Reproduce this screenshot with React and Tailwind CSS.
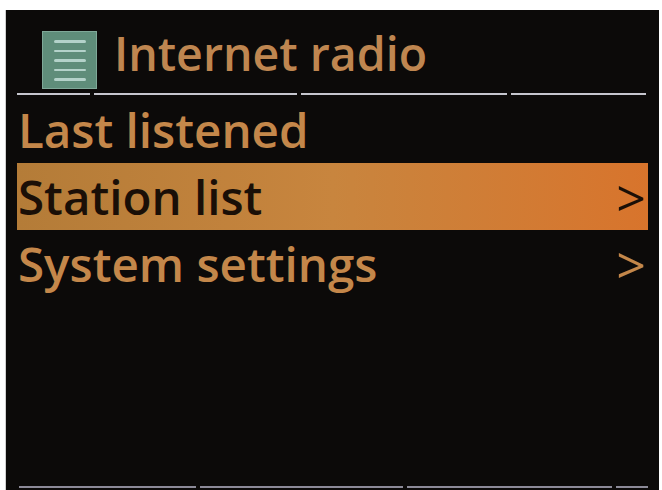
import React from 'react';

const menu = [
  { label: 'Last listened', arrow: false },
  { label: 'Station list', arrow: true, active: true },
  { label: 'System settings', arrow: true },
];

function ListIcon() {
  return (
    <div className="flex h-[58px] w-[55px] flex-col items-center justify-start gap-[7px] border border-[#7fa898] bg-[#5f8d7a] pt-[8px]">
      {[0, 1, 2, 3, 4].map((i) => (
        <div key={i} className="h-[2.5px] w-[32px] rounded-full bg-[#b4d2ca]" />
      ))}
    </div>
  );
}

function Divider({ segments, color }) {
  return (
    <div className="flex gap-[4px]">
      {segments.map((w, i) => (
        <div key={i} className={`h-[2px] ${color}`} style={{ width: w }} />
      ))}
    </div>
  );
}

function MenuRow({ label, arrow, active }) {
  return (
    <div
      className={`flex h-[67px] items-center justify-between pl-[1px] pr-[2px] text-[47.5px] font-semibold leading-[67px] ${
        active
          ? 'bg-gradient-to-r from-[#b47c38] via-[#c8853e] to-[#d8742c] text-[#1a0f07]'
          : 'text-[#c4874a]'
      }`}
    >
      <span>{label}</span>
      {arrow && <span className="text-[52px] font-medium">&gt;</span>}
    </div>
  );
}

export default function App() {
  return (
    <div
      className="h-[490px] w-[662px] overflow-hidden bg-white pl-[5px] pr-[3px] pt-[10px]"
      style={{ fontFamily: '"Open Sans", "Noto Sans", sans-serif' }}
    >
      <div className="flex h-[480px] flex-col border-l border-[#d0d0d0] bg-[#0c0a09] pl-[11px] pr-[11px]">
        <div className="flex h-[83px] items-start gap-[17px] pl-[25px] pt-[21px]">
          <ListIcon />
          <span className="mt-[-1px] text-[46.5px] font-semibold leading-[47px] text-[#bf8650]">Internet radio</span>
        </div>
        <Divider segments={[73, 203, 206, 135]} color="bg-[#c6c6ce]" />
        <div className="mt-[1px] flex flex-col">
          {menu.map((m) => (
            <MenuRow key={m.label} {...m} />
          ))}
        </div>
        <div className="flex-1" />
        <div className="pl-[2px]">
          <Divider segments={[177, 203, 205, 32]} color="bg-[#8c8a98]" />
        </div>
        <div className="h-[2px]" />
      </div>
    </div>
  );
}
